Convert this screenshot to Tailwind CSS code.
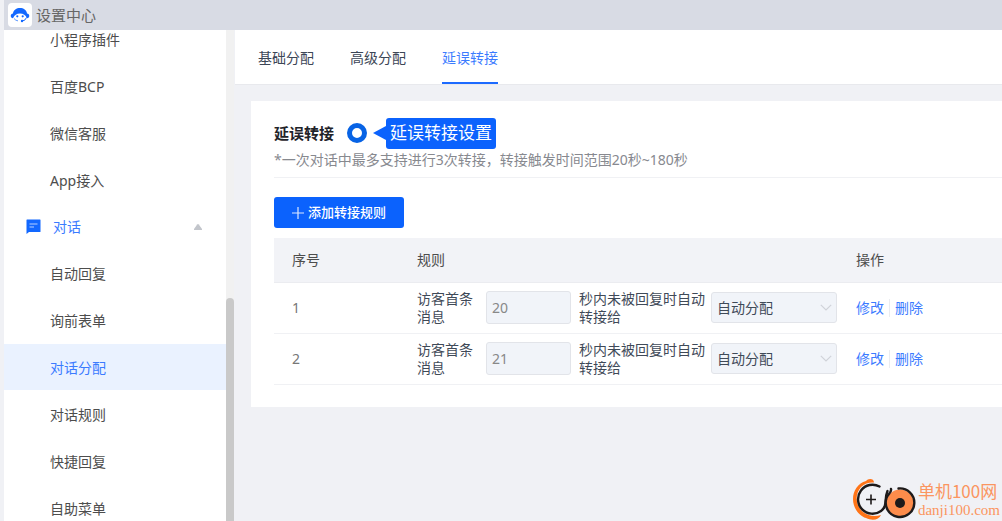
<!DOCTYPE html>
<html lang="zh-CN">
<head>
<meta charset="utf-8">
<meta name="viewport" content="width=device-width, initial-scale=1">
<title>设置中心</title>
<script src="https://cdn.jsdelivr.net/npm/@tailwindcss/browser@4"></script>
</head>
<body class="flex h-screen flex-col overflow-hidden bg-[#f0f1f5] pl-1 font-['Noto_Sans','Noto_Sans_CJK_SC',sans-serif] text-[14px] text-[#4d4d4d]">
<header class="flex h-[30px] shrink-0 items-center gap-1 bg-[#d8dbe4] pl-1">
  <svg class="h-6 w-6" viewBox="0 0 24 24" fill="none" aria-hidden="true">
    <rect width="24" height="24" rx="4" fill="#fff"/>
    <path d="M5 10.500C5.500 3 18.500 3 19 10.500C22 10.800 22 15 19 15.200C17.500 12 15.500 10.500 12 10.500S6.500 12 5 15.200C2 15 2 10.800 5 10.500Z" fill="#1268ff"/>
    <circle cx="9.300" cy="13.300" r="1.100" fill="#1268ff"/>
    <circle cx="14.700" cy="13.300" r="1.100" fill="#1268ff"/>
    <path d="M18.500 14.500Q17.500 17.500 14.500 18" stroke="#1268ff" stroke-width="1"/>
    <circle cx="14" cy="18" r="1.200" fill="#1268ff"/>
    <path d="M6 15.500Q7.500 17.500 10 17.900" stroke="#1268ff" stroke-width=".7"/>
  </svg>
  <h1 class="text-[15px] text-[#666]">设置中心</h1>
</header>
<div class="flex min-h-0 flex-1">
  <nav class="flex w-[230px] shrink-0 overflow-hidden bg-white" aria-label="设置">
    <div class="-mt-[14px] flex flex-1 flex-col gap-px">
      <a href="#" class="flex h-[46px] shrink-0 items-center pl-[46px]">小程序插件</a>
      <a href="#" class="flex h-[46px] shrink-0 items-center pl-[46px]">百度BCP</a>
      <a href="#" class="flex h-[46px] shrink-0 items-center pl-[46px]">微信客服</a>
      <a href="#" class="flex h-[46px] shrink-0 items-center pl-[46px]">App接入</a>
      <button type="button" aria-expanded="true" class="flex h-[45px] shrink-0 items-center pr-6 pl-[22px] text-[#3b7bff]">
        <svg class="mr-3 h-[15px] w-[15px]" viewBox="0 0 15 15" fill="none" aria-hidden="true">
          <path d="M.5 1Q.5.500 1 .500H14Q14.500.500 14.500 1V12.500Q14.500 13 14 13H3L.5 15Z" fill="#1268ff"/>
          <path d="M3.500 5H11.500M3.500 8H8" stroke="#b5d0ff" stroke-width="1.200"/>
        </svg>
        <span>对话</span>
        <svg class="ml-auto h-[6px] w-2" viewBox="0 0 8 6" aria-hidden="true"><path d="M3.200.5Q4-.3 4.800.5L8 5V6H0V5Z" fill="#c2c5cb"/></svg>
      </button>
      <a href="#" class="flex h-[46px] shrink-0 items-center pl-[46px]">自动回复</a>
      <a href="#" class="flex h-[46px] shrink-0 items-center pl-[46px]">询前表单</a>
      <a href="#" aria-current="page" class="flex h-[46px] shrink-0 items-center bg-[#eaf2ff] pl-[46px] text-[#3b7bff]">对话分配</a>
      <a href="#" class="flex h-[46px] shrink-0 items-center pl-[46px]">对话规则</a>
      <a href="#" class="flex h-[46px] shrink-0 items-center pl-[46px]">快捷回复</a>
      <a href="#" class="flex h-[46px] shrink-0 items-center pl-[46px]">自助菜单</a>
    </div>
    <div class="w-2 bg-[#f1f1f1] pt-[268px]" aria-hidden="true"><div class="h-full rounded-t-full bg-[#c9c9c9]"></div></div>
  </nav>
  <main class="min-w-0 flex-1">
    <div class="ml-px flex h-[55px] gap-9 border-b border-[#e8e9ed] bg-white pl-[23px] text-[#3c4656]" role="tablist">
      <button type="button" role="tab" aria-selected="false">基础分配</button>
      <button type="button" role="tab" aria-selected="false">高级分配</button>
      <button type="button" role="tab" aria-selected="true" class="border-y-2 border-t-transparent border-b-[#1c6aff] text-[#3b7bff]">延误转接</button>
    </div>
    <section class="mt-4 ml-[17px] bg-white pt-4 pb-[22px] pl-[23px]">
      <div class="flex h-8 items-center">
        <h2 class="text-[15px] font-bold text-[#1f2329]">延误转接</h2>
        <span class="ml-[13px] h-5 w-5 rounded-full border-[5px] border-[#0763e5]"></span>
        <svg class="ml-[6px] h-[14px] w-[13px]" viewBox="0 0 13 14" aria-hidden="true"><path d="M0 7L13 0V14Z" fill="#0b62fd"/></svg>
        <span class="flex h-[31px] items-center rounded-[3px] bg-[#0b62fd] px-1 text-[17px] text-white">延误转接设置</span>
      </div>
      <p class="border-b border-[#f0f1f4] pb-[6px] text-[#87898f] leading-[22px]">*一次对话中最多支持进行3次转接，转接触发时间范围20秒~180秒</p>
      <button type="button" class="mt-[19px] mb-[10px] flex h-[31px] w-[130px] items-center justify-center gap-1 rounded-[3px] bg-[#0b62fd] text-[13px] font-medium text-white">
        <svg class="h-3 w-3" viewBox="0 0 12 12" stroke="#dce8ff" stroke-width="1.200" aria-hidden="true"><path d="M6 0V12M0 6H12"/></svg>
        添加转接规则
      </button>
      <table class="w-full table-fixed border-collapse text-left">
        <colgroup><col class="w-[124px]"><col class="w-[439px]"><col></colgroup>
        <thead>
          <tr class="h-11 border-b border-[#ebecf0] bg-[#f2f3f7]">
            <th class="pl-[18px] font-normal">序号</th>
            <th class="pl-[19px] font-normal">规则</th>
            <th class="pl-[19px] font-normal">操作</th>
          </tr>
        </thead>
        <tbody class="text-[#3f4a58]">
          <tr class="h-[51px] border-b border-[#f0f1f4]">
            <td class="pl-[18px] text-[#777]">1</td>
            <td class="pl-[19px]">
              <div class="flex items-center">
                <label for="sec1" class="w-14 leading-[18px]">访客首条消息</label>
                <input id="sec1" type="text" value="20" class="mr-2 ml-[13px] h-[33px] w-[85px] rounded-[3px] border border-[#e2e4e9] bg-[#f1f4f9] px-[5px] text-[#888]">
                <label for="to1" class="mr-[6px] w-[126px] leading-[18px]">秒内未被回复时自动转接给</label>
                <span class="grid w-[126px] items-center">
                  <select id="to1" class="col-start-1 row-start-1 h-[31px] w-full appearance-none rounded-[3px] border border-[#e2e4e9] bg-[#f1f4f9] px-[5px]"><option>自动分配</option></select>
                  <svg class="pointer-events-none col-start-1 row-start-1 mr-[5px] h-[7px] w-3 justify-self-end" viewBox="0 0 12 7" fill="none" stroke="#d0d3d9" stroke-width="1.200" aria-hidden="true"><path d="M.8.800L6 6L11.200.800"/></svg>
                </span>
              </div>
            </td>
            <td class="pl-[19px] text-[#3b7bff]"><div class="flex items-center"><a href="#">修改</a><span class="mx-[5px] h-[18px] w-px bg-[#eaecf0]"></span><a href="#">删除</a></div></td>
          </tr>
          <tr class="h-[51px] border-b border-[#f0f1f4]">
            <td class="pl-[18px] text-[#777]">2</td>
            <td class="pl-[19px]">
              <div class="flex items-center">
                <label for="sec2" class="w-14 leading-[18px]">访客首条消息</label>
                <input id="sec2" type="text" value="21" class="mr-2 ml-[13px] h-[33px] w-[85px] rounded-[3px] border border-[#e2e4e9] bg-[#f1f4f9] px-[5px] text-[#888]">
                <label for="to2" class="mr-[6px] w-[126px] leading-[18px]">秒内未被回复时自动转接给</label>
                <span class="grid w-[126px] items-center">
                  <select id="to2" class="col-start-1 row-start-1 h-[31px] w-full appearance-none rounded-[3px] border border-[#e2e4e9] bg-[#f1f4f9] px-[5px]"><option>自动分配</option></select>
                  <svg class="pointer-events-none col-start-1 row-start-1 mr-[5px] h-[7px] w-3 justify-self-end" viewBox="0 0 12 7" fill="none" stroke="#d0d3d9" stroke-width="1.200" aria-hidden="true"><path d="M.8.800L6 6L11.200.800"/></svg>
                </span>
              </div>
            </td>
            <td class="pl-[19px] text-[#3b7bff]"><div class="flex items-center"><a href="#">修改</a><span class="mx-[5px] h-[18px] w-px bg-[#eaecf0]"></span><a href="#">删除</a></div></td>
          </tr>
        </tbody>
      </table>
    </section>
  </main>
</div>
<div class="absolute right-[2px] bottom-0 flex items-center gap-px text-[#fb9560]">
  <svg class="h-[43px] w-16" viewBox="0 0 64 43" fill="none" aria-hidden="true">
    <path d="M21 4.500C21 0 15 0 13 3C5 5 0 13 0 21C0 30 6 38 13 40C19 43 26 42 28 37C22 39 15 38 10 34C3 28 1 17 8 9C12 5 17 4 21 4.500Z" fill="#ff7417"/>
    <path d="M26.500 8.500A14.500 14.500 0 1 0 28 33C35 28 31 21 34.500 13" stroke="#1d1a1a" stroke-width="2.400" stroke-linecap="round"/>
    <path d="M18 16.500V26.500M13 21.500H23" stroke="#1d1a1a" stroke-width="1.600"/>
    <circle cx="47" cy="25" r="13.500" fill="#fd8c4b"/>
    <path d="M45.500 10.500A14.300 14.300 0 1 1 33.500 20C34.500 16 39 15 38 11" stroke="#1d1a1a" stroke-width="2.400" stroke-linecap="round"/>
    <circle cx="47" cy="25" r="5" fill="#1d1a1a"/>
  </svg>
  <div>
    <p class="font-['Noto_Sans_CJK_SC',sans-serif] text-[17px] leading-5">单机100网</p>
    <p class="font-['Liberation_Serif',serif] text-[15px] leading-[18px]">danji100.com</p>
  </div>
</div>
</body>
</html>
